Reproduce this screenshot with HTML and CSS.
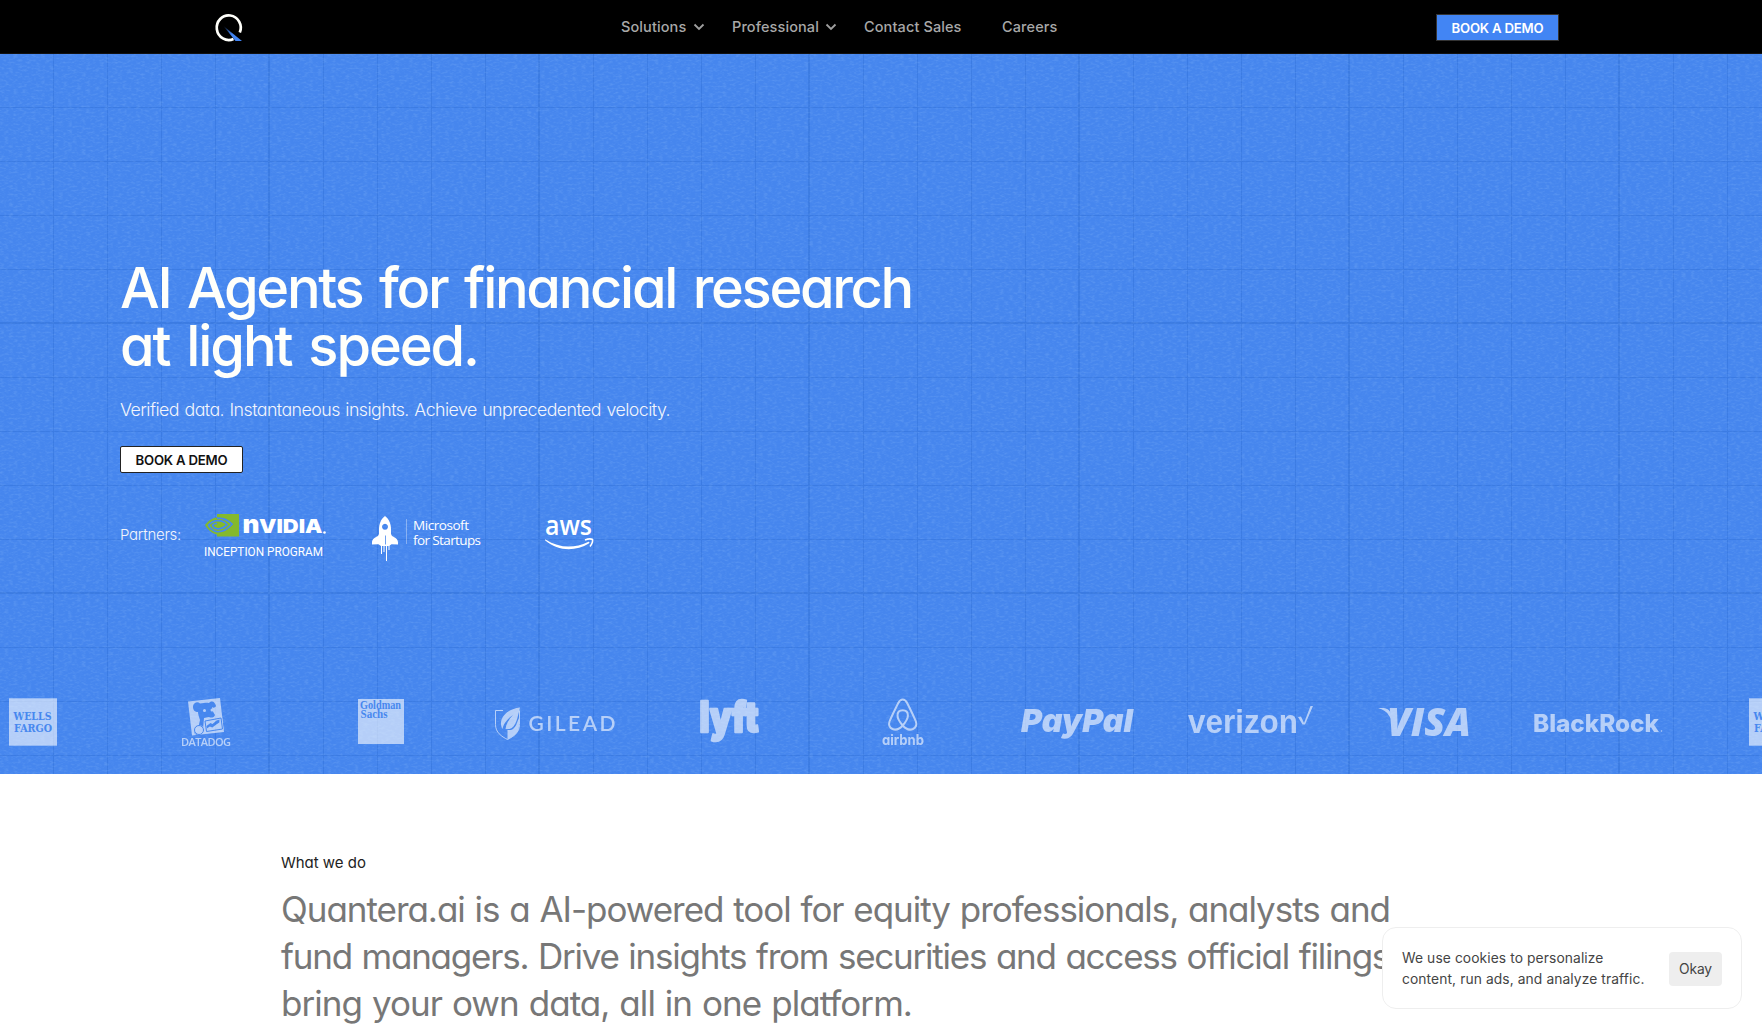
FILE: index.html
```html
<!DOCTYPE html>
<html lang="en">
<head>
<meta charset="utf-8">
<title>Quantera.ai</title>
<link rel="stylesheet" href="styles.css">
</head>
<body>
<header class="nav">
  <a class="brand" href="#" aria-label="Home">
    <svg width="28" height="30" viewBox="0 0 28 30">
      <defs><linearGradient id="beam" x1="0" y1="0" x2="1" y2="1"><stop offset="0" stop-color="#4285f4" stop-opacity=".1"/><stop offset=".5" stop-color="#4285f4"/><stop offset="1" stop-color="#4285f4"/></linearGradient></defs>
      <path d="M18.500 27A12 12.300 0 1 1 24.800 20.500" fill="none" stroke="#fffffa" stroke-width="2.7"/>
      <path d="M8.500 14 27 29H20.500Z" fill="url(#beam)"/>
    </svg>
  </a>
  <nav class="links">
    <a class="link solutions">Solutions<svg class="chev" width="12" height="8" viewBox="0 0 12 8"><path d="M1.5 1.5 6 6 10.500 1.500"/></svg></a>
    <a class="link professional">Professional<svg class="chev" width="12" height="8" viewBox="0 0 12 8"><path d="M1.5 1.5 6 6 10.500 1.500"/></svg></a>
    <a class="link contact">Contact Sales</a>
    <a class="link">Careers</a>
  </nav>
  <a class="btn btn-blue">BOOK A DEMO</a>
</header>

<section class="hero">
  <svg class="texture" width="1762" height="720">
    <filter id="grain" x="0" y="0" width="100%" height="100%">
      <feTurbulence type="fractalNoise" baseFrequency=".22 .5" numOctaves="2" seed="4"/>
      <feColorMatrix values="0 0 0 0 .38  0 0 0 0 .63  0 0 0 0 1  2.4 0 0 0 -1.05"/>
    </filter>
    <rect width="1762" height="720" filter="url(#grain)" opacity=".18"/>
  </svg>
  <div class="intro">
    <h1><span class="h1a">AI Agents for financial research</span><br><span class="h1b">at light speed.</span></h1>
    <p class="lead">Verified data. Instantaneous insights. Achieve unprecedented velocity.</p>
    <a class="btn btn-white">BOOK A DEMO</a>
    <div class="partners">
      <span class="plabel">Partners:</span>
      <svg class="nvidia" width="124" height="46" viewBox="204 512 124 46">
        <path fill="#84b92d" d="M217 513h22v22.500h-22z"/>
        <path fill="#84b92d" d="M217 516.500c-5 .4-9.500 4-12 7.500 2.500 4.500 7 8.500 12 9.500z"/>
        <g fill="none" stroke="#4788ef" stroke-width="1.700"><path d="M217 517.200c7-.6 12 3 15 6-4 4.500-9 8-15 7.500-4-.5-7-3.500-8.500-6.500 2.500-3 5-4.200 8.500-4.500 5-.3 8 1.500 10 4-3 3-6 4.500-10 4-2.500-.5-4-2-4.500-3.500 1.500-1.500 3-1.800 4.500-1.700"/></g>
        <path d="M217 521.500c3 0 4 1 5.500 2.500l-3 2.500-2.500-4z" fill="#84b92d"/>
        <text x="242.500" y="532" class="nv nv-n" textLength="17" lengthAdjust="spacingAndGlyphs">n</text><text x="259" y="532" class="nv" textLength="63.500" lengthAdjust="spacingAndGlyphs">VIDIA</text><circle cx="324.500" cy="531.500" r="1.300" fill="#fff"/>
        <text x="204" y="555" class="incep" textLength="119" lengthAdjust="spacingAndGlyphs">INCEPTION PROGRAM</text>
      </svg>
      <svg class="msft" width="112" height="46" viewBox="371 515 112 46">
        <path fill="#fff" fill-rule="evenodd" d="M385 515c4 3 6 8 6 13v5l1 2c3 1.500 6 3 6 6.500v2l-6.500-.2-2.500 1.700h-8l-2.500-1.700-6.500.2v-2c0-3.500 3-5 6-6.500l1-2v-5c0-5 2-10 6-13zm0 7.700a3 3 0 1 0 .01 0z"/>
        <path stroke="#fff" d="M381.500 544v9M384 544v7M386.500 535v25M389 544v5"/><path stroke="#4788ef" stroke-width=".8" d="M385.500 534.500v9"/>
        <path stroke="#fff" opacity=".35" d="M406.500 518v25"/>
        <text x="413" y="528.500" class="ms" textLength="56">Microsoft</text><text x="413" y="543.500" class="ms" textLength="68">for Startups</text>
      </svg>
      <svg class="aws" width="52" height="34" viewBox="544 516 52 34">
        <text x="545" y="534" class="awst" textLength="47" lengthAdjust="spacingAndGlyphs">aws</text>
        <path fill="#fff" d="M545.500 538.500c14 9 29 9 42.500 2.500 1.500-.5 2 .5.800 1.500-13 8-31 8-43.500-3-.5-.6-.3-1.200.2-1z"/><path fill="none" stroke="#fff" stroke-width="1.600" d="M585 539c3-1.200 6-1.300 7.500-.500.5 2-.500 4.500-2.500 7"/>
      </svg>
    </div>
  </div>
  <div class="logos">
    <svg viewBox="-54 692 174 60"><rect x="9" y="698.300" width="48" height="47.400"/><g class="cut serif"><text x="13.500" y="720" textLength="38" lengthAdjust="spacingAndGlyphs">WELLS</text><text x="14" y="731.500" textLength="38" lengthAdjust="spacingAndGlyphs">FARGO</text></g></svg>
    <svg viewBox="120 692 174 60"><path d="M188 701.500 220 698l4 34-32 3.500z"/><g class="cut"><path d="M193 706c1-4 5-4.500 7-2.500 5-1 7-1 9-.5 3-3 6-1 7 3-1 2-3 2-4 1 0 4 2 6 3 8-1 3-4 3-6 2l-5 1-1 11c0 6-4 8-8 5-2-3 1-6 3-5l2-9c-1-3-2-6-2-8-3 0-5-2-5-5z"/></g><circle cx="204.500" cy="710.500" r="1.500"/><circle cx="212" cy="710" r="1.500"/><path d="m204 720 18-3 1.500 13-18 3z"/><path d="m205 721 16-3 1.500 11-16 2.500z" class="line"/><path class="cut" d="m206.500 726 4-3 2 1 4-3.500 3-1-.2 3-3 2-4 3-2.500-1-3 2z"/><circle cx="199" cy="730" r="5"/><circle cx="199" cy="730" r="4.500" class="line"/><text x="181" y="746" class="dd" textLength="50">DATADOG</text></svg>
    <svg viewBox="294 692 174 60"><rect x="358" y="699" width="46" height="45"/><g class="cut gs"><text x="360" y="709" textLength="41" lengthAdjust="spacingAndGlyphs">Goldman</text><text x="360.500" y="717.800" textLength="27" lengthAdjust="spacingAndGlyphs">Sachs</text></g></svg>
    <svg viewBox="468 692 174 60"><path d="M503 710.500h-7.500v14c0 8 6 12 12 15 6-3 12-7 12-15v-14" fill="none" class="ln" stroke-width="1"/><path d="M520 707.500c-10 1-18 7-19 14.500-.3 3 .5 5 1.500 7 1-6 6-11 10.500-14-4 4-7 9-7.500 14h4c7-2 8-12 10.500-21.500z"/><path d="M507.500 730h3.500c5-1.500 6-8 8-12v8c0 7-6 11-11.500 13.500z"/><text x="528.500" y="731" class="gil" textLength="87">GILEAD</text></svg>
    <svg viewBox="642 692 174 60"><text x="699.500" y="732" class="lyft" textLength="59" lengthAdjust="spacingAndGlyphs">lyft</text></svg>
    <svg viewBox="816 692 174 60"><path fill="none" class="ln" stroke-width="2" d="M902.700 725.500c-3.500-4-5.200-7.500-5.200-10 0-3.300 2.200-5.200 5.200-5.200s5.200 1.900 5.200 5.200c0 2.500-1.700 6-5.200 10-4 4.500-7.500 4.700-10.200 3.500-3-1.500-4-4.500-3-7.500 2-5 6-13 8.500-18 1.200-2.500 2.500-4 4.700-4s3.500 1.500 4.700 4c2.500 5 6.500 13 8.500 18 1 3 0 6-3 7.500-2.700 1.200-6.200 1-10.200-3.500z"/><text x="882" y="745" class="air" textLength="42" lengthAdjust="spacingAndGlyphs">airbnb</text></svg>
    <svg viewBox="990 692 174 60"><text x="1021" y="731.500" class="pp" textLength="112" lengthAdjust="spacingAndGlyphs">PayPal</text></svg>
    <svg viewBox="1164 692 174 60"><text x="1188" y="733" class="vz" textLength="110" lengthAdjust="spacingAndGlyphs">verizon</text><path d="m1298 717 3-.5 3 6.500 6.500-17h2.500l-8 18.500h-2.500z"/></svg>
    <svg viewBox="1338 692 174 60"><path d="M1378 708.300c7-.8 11 0 13 5.500l2 8-4-6c-2-4-6-6.500-11-7.500z"/><text x="1387" y="736" class="visa" textLength="84" lengthAdjust="spacingAndGlyphs">VISA</text></svg>
    <svg viewBox="1512 692 174 60"><text x="1533" y="732" class="br" textLength="126" lengthAdjust="spacingAndGlyphs">BlackRock</text><circle cx="1661.500" cy="731" r=".8"/></svg>
    <svg viewBox="-54 692 174 60"><rect x="9" y="698.300" width="48" height="47.400"/><g class="cut serif"><text x="13.500" y="720" textLength="38" lengthAdjust="spacingAndGlyphs">WELLS</text><text x="14" y="731.500" textLength="38" lengthAdjust="spacingAndGlyphs">FARGO</text></g></svg>
  </div>
</section>

<section class="about">
  <h2>What we do</h2>
  <p><span class="l1">Quantera.ai is a AI-powered tool for equity professionals, analysts and</span><br><span class="l2">fund managers. Drive insights from securities and access official filings,</span><br><span class="l3">bring your own data, all in one platform.</span></p>
</section>

<aside class="cookie">
  <p>We use cookies to personalize<br>content, run ads, and analyze traffic.</p>
  <button>Okay</button>
</aside>
</body>
</html>
```
FILE: styles.css
```css
* { box-sizing: border-box; margin: 0; }
body { height: 1029px; overflow: hidden; background: #fff; font-family: Inter, "Liberation Sans", sans-serif; font-feature-settings: "cv11"; }
svg { overflow: visible; }

/* Top bar */
.nav { height: 54px; background: #000; display: flex; align-items: center; border-bottom: 1px solid #111; }
.brand { margin-left: 215px; width: 28px; height: 30px; }
.links { display: flex; margin-left: 378px; font-size: 14.500px; font-weight: 450; color: #a8a8a8; letter-spacing: .11px; font-feature-settings: normal; }
.link { display: flex; align-items: center; height: 20px; white-space: nowrap; }
.solutions { width: 111px; }
.professional { width: 132px; }
.contact { width: 138px; }
.chev { margin-left: 7px; margin-top: 1px; fill: none; stroke: #a0a0a0; stroke-width: 1.8; }
.professional .chev { margin-left: 6px; }
.btn { display: flex; align-items: center; justify-content: center; width: 123px; height: 27px; font-size: 13.200px; font-weight: 600; line-height: 17px; letter-spacing: -.209px; white-space: nowrap; padding-top: 1px; }
.btn-blue { margin: 2px 203px 0 auto; background: #4285f4; border: 1px solid #333; color: #fff; }
.btn-white { margin-top: 23px; background: #fff; border: 1px solid #222; border-radius: 2px; color: #111; }

/* Hero: 54px grid with a stronger line every fifth cell */
.hero {
  position: relative; height: 720px; padding-top: 205px;
  background-color: #4686ee;
  background-image:
    linear-gradient(90deg, #3b7be2 2px, transparent 2px), linear-gradient(#3b7be2 2px, transparent 2px),
    linear-gradient(90deg, #3b7be3 1px, transparent 1px), linear-gradient(#3b7be3 1px, transparent 1px);
  background-size: 270px 270px, 270px 270px, 54px 54px, 54px 54px;
  background-position: -2px 0, 0 -2px, -1px 0, 0 -1px;
}
.texture { position: absolute; inset: 0; }
.intro { position: relative; padding-left: 120px; height: 433px; }
h1 { font-size: 56px; font-weight: 550; line-height: 58px; color: #fffffa; white-space: nowrap; word-spacing: 4px; }
.h1a { letter-spacing: -2.300px; }
.h1b { letter-spacing: -2.092px; }
.lead { margin-top: 22px; font-size: 17.800px; line-height: 26px; color: #f2f5fc; font-weight: 350; letter-spacing: -.546px; white-space: nowrap; word-spacing: 1px; }
.partners { display: flex; align-items: flex-start; margin-top: 40px; color: #f2f5fc; }
.plabel { width: 84px; font-size: 15px; font-weight: 350; line-height: 20px; letter-spacing: -.262px; padding-top: 12px; }
.msft { margin: 3px 0 0 43px; }
.aws { margin: 4px 0 0 61px; }
svg text { font-feature-settings: normal; }
.nv { font: 900 19px Inter, sans-serif; fill: #fff; }
.nv-n { font-size: 25px; }
.incep { font: 400 12.500px Roboto, sans-serif; fill: #fff; }
.ms { font: 400 13.500px "Open Sans", sans-serif; fill: #fff; }
.awst { font: 600 27px "Open Sans", sans-serif; fill: #fff; }

/* Customer logo strip */
.logos { position: relative; display: flex; margin-left: -54px; width: 1816px; overflow: hidden; fill: #fff; opacity: .6; }
.logos svg { flex: 0 0 174px; height: 60px; }
.cut { fill: #4788ef; }
.line { fill: none; stroke: #4788ef; }
.ln { stroke: #fff; }
.serif { font: 700 10.500px "DejaVu Serif", serif; }
.gs { font: 700 11.500px "Liberation Serif", serif; }
.dd { font: 600 11px "Open Sans", sans-serif; }
.gil { font: 600 21px Lato, sans-serif; }
.lyft { font: 900 42px Inter, sans-serif; stroke: #fff; stroke-width: 2.500px; stroke-linejoin: round; }
.air { font: 700 14px Inter, sans-serif; }
.logos .air { font-feature-settings: "cv11"; }
.pp { font: italic 900 32px Inter, sans-serif; }
.logos .pp { font-feature-settings: "cv11"; }
.vz { font: 700 33px "Liberation Sans", sans-serif; }
.visa { font: italic 800 39px "Open Sans", sans-serif; }
.br { font: 800 24px Inter, sans-serif; }

/* What we do */
.about { padding: 78px 0 0 281px; }
h2 { font-size: 15px; font-weight: 400; line-height: 22px; letter-spacing: -.02px; color: #222; white-space: nowrap; }
.about p { margin-top: 12px; font-size: 35px; line-height: 47px; color: #777; white-space: nowrap; word-spacing: 1px; }
.l1 { letter-spacing: -1.031px; }
.l2 { letter-spacing: -1.222px; }
.l3 { letter-spacing: -.942px; }

/* Cookie notice */
.cookie { position: fixed; left: 1382px; top: 927px; width: 360px; height: 82px; border: 1px solid #eee; border-radius: 14px; background: #fff; display: flex; align-items: center; padding: 1px 19px 0; font-feature-settings: normal; color: #444; }
.cookie p { flex: 1; font-size: 13.800px; line-height: 21px; letter-spacing: .1px; white-space: nowrap; }
.cookie button { width: 53px; height: 34px; border: 0; border-radius: 4px; background: #eee; color: #444; font: 13.800px Inter, sans-serif; letter-spacing: -.1px; padding: 0; }
```
